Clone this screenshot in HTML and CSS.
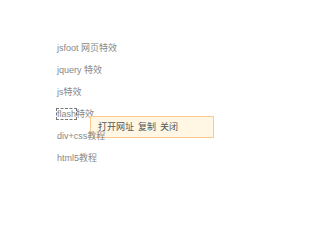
FILE: index.html
```html
<!DOCTYPE html>
<html lang="zh">
<head>
<meta charset="utf-8">
<link rel="stylesheet" href="styles.css">
</head>
<body>
<ul class="links">
  <li><a href="#">jsfoot 网页特效</a></li>
  <li><a href="#">jquery 特效</a></li>
  <li><a href="#">js特效</a></li>
  <li class="active"><a href="#"><span class="focus">flash</span>特效</a>
    <div class="tip">
      <a href="#">打开网址</a>
      <a href="#">复制</a>
      <a href="#">关闭</a>
    </div>
  </li>
  <li><a href="#">div+css教程</a></li>
  <li><a href="#">html5教程</a></li>
</ul>
</body>
</html>
```

FILE: styles.css
```css
html, body {
  margin: 0;
  padding: 0;
  background: #ffffff;
}
body {
  font-family: "Liberation Sans", "Noto Sans CJK SC", sans-serif;
  font-size: 9px;
  color: #888;
}
.links {
  list-style: none;
  margin: 0;
  padding: 37px 0 0 57px;
}
.links li {
  position: relative;
  height: 22px;
  line-height: 22px;
}
.links a {
  color: #888;
  text-decoration: none;
}
.focus {
  outline: 1px dashed #777;
  outline-offset: 0;
}
.tip {
  position: absolute;
  left: 33px;
  top: 13px;
  box-sizing: border-box;
  width: 124px;
  height: 22px;
  border: 1px solid #fcc88e;
  background: #fff7e4;
  padding-left: 7px;
  display: flex;
  gap: 4px;
  align-items: center;
  line-height: 20px;
}
.tip a {
  color: #555;
}
```
